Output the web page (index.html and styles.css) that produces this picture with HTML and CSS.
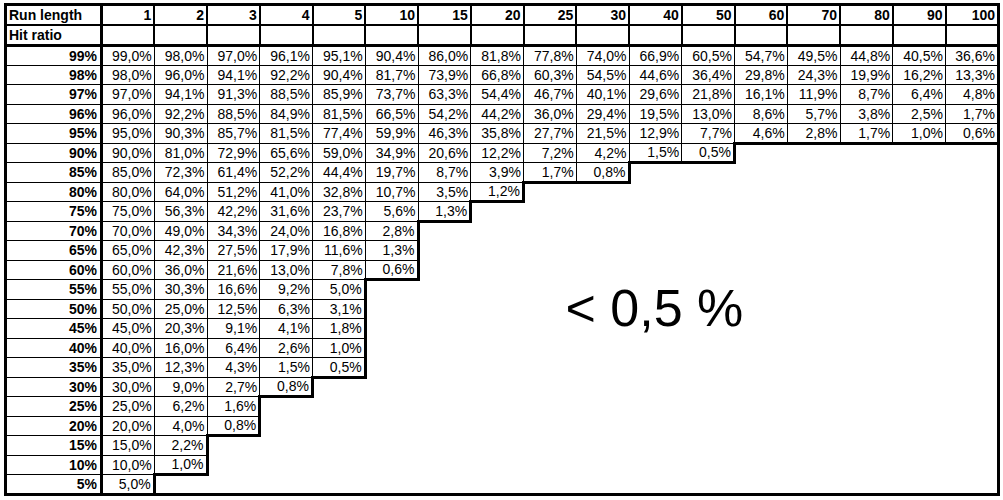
FILE: index.html
```html
<!DOCTYPE html>
<html lang="en">
<head>
    <meta charset="UTF-8">
    <title>Hit ratio by run length</title>
    <link rel="stylesheet" href="styles.css">
</head>
<body>
    <div class="page">
        <table class="grid">
            <colgroup>
                <col class="label-col">
                <col span="17">
            </colgroup>
            <thead>
                <tr class="head">
                    <th class="label left">Run length</th>
                    <th>1</th><th>2</th><th>3</th><th>4</th><th>5</th><th>10</th><th>15</th><th>20</th><th>25</th><th>30</th><th>40</th><th>50</th><th>60</th><th>70</th><th>80</th><th>90</th><th>100</th>
                </tr>
                <tr class="head sub">
                    <th class="label left">Hit ratio</th>
                    <th></th><th></th><th></th><th></th><th></th><th></th><th></th><th></th><th></th><th></th><th></th><th></th><th></th><th></th><th></th><th></th><th></th>
                </tr>
            </thead>
            <tbody>
                <tr>
                    <td class="label">99%</td>
                    <td>99,0%</td><td>98,0%</td><td>97,0%</td><td>96,1%</td><td>95,1%</td><td>90,4%</td><td>86,0%</td><td>81,8%</td><td>77,8%</td><td>74,0%</td><td>66,9%</td><td>60,5%</td><td>54,7%</td><td>49,5%</td><td>44,8%</td><td>40,5%</td><td>36,6%</td>
                </tr>
                <tr>
                    <td class="label">98%</td>
                    <td>98,0%</td><td>96,0%</td><td>94,1%</td><td>92,2%</td><td>90,4%</td><td>81,7%</td><td>73,9%</td><td>66,8%</td><td>60,3%</td><td>54,5%</td><td>44,6%</td><td>36,4%</td><td>29,8%</td><td>24,3%</td><td>19,9%</td><td>16,2%</td><td>13,3%</td>
                </tr>
                <tr>
                    <td class="label">97%</td>
                    <td>97,0%</td><td>94,1%</td><td>91,3%</td><td>88,5%</td><td>85,9%</td><td>73,7%</td><td>63,3%</td><td>54,4%</td><td>46,7%</td><td>40,1%</td><td>29,6%</td><td>21,8%</td><td>16,1%</td><td>11,9%</td><td>8,7%</td><td>6,4%</td><td>4,8%</td>
                </tr>
                <tr>
                    <td class="label">96%</td>
                    <td>96,0%</td><td>92,2%</td><td>88,5%</td><td>84,9%</td><td>81,5%</td><td>66,5%</td><td>54,2%</td><td>44,2%</td><td>36,0%</td><td>29,4%</td><td>19,5%</td><td>13,0%</td><td>8,6%</td><td>5,7%</td><td>3,8%</td><td>2,5%</td><td>1,7%</td>
                </tr>
                <tr>
                    <td class="label">95%</td>
                    <td>95,0%</td><td>90,3%</td><td>85,7%</td><td>81,5%</td><td>77,4%</td><td>59,9%</td><td>46,3%</td><td>35,8%</td><td>27,7%</td><td>21,5%</td><td>12,9%</td><td>7,7%</td><td class="b">4,6%</td><td class="b">2,8%</td><td class="b">1,7%</td><td class="b">1,0%</td><td class="b">0,6%</td>
                </tr>
                <tr>
                    <td class="label">90%</td>
                    <td>90,0%</td><td>81,0%</td><td>72,9%</td><td>65,6%</td><td>59,0%</td><td>34,9%</td><td>20,6%</td><td>12,2%</td><td>7,2%</td><td>4,2%</td><td class="b">1,5%</td><td class="r b">0,5%</td>
                    <td class="e" colspan="5"></td>
                </tr>
                <tr>
                    <td class="label">85%</td>
                    <td>85,0%</td><td>72,3%</td><td>61,4%</td><td>52,2%</td><td>44,4%</td><td>19,7%</td><td>8,7%</td><td>3,9%</td><td class="b">1,7%</td><td class="r b">0,8%</td>
                    <td class="e" colspan="7"></td>
                </tr>
                <tr>
                    <td class="label">80%</td>
                    <td>80,0%</td><td>64,0%</td><td>51,2%</td><td>41,0%</td><td>32,8%</td><td>10,7%</td><td>3,5%</td><td class="r b">1,2%</td>
                    <td class="e" colspan="9"></td>
                </tr>
                <tr>
                    <td class="label">75%</td>
                    <td>75,0%</td><td>56,3%</td><td>42,2%</td><td>31,6%</td><td>23,7%</td><td>5,6%</td><td class="r b">1,3%</td>
                    <td class="e" colspan="10"></td>
                </tr>
                <tr>
                    <td class="label">70%</td>
                    <td>70,0%</td><td>49,0%</td><td>34,3%</td><td>24,0%</td><td>16,8%</td><td class="r">2,8%</td>
                    <td class="e note" colspan="11" rowspan="14">&lt; 0,5 %</td>
                </tr>
                <tr>
                    <td class="label">65%</td>
                    <td>65,0%</td><td>42,3%</td><td>27,5%</td><td>17,9%</td><td>11,6%</td><td class="r">1,3%</td>
                </tr>
                <tr>
                    <td class="label">60%</td>
                    <td>60,0%</td><td>36,0%</td><td>21,6%</td><td>13,0%</td><td>7,8%</td><td class="r b">0,6%</td>
                </tr>
                <tr>
                    <td class="label">55%</td>
                    <td>55,0%</td><td>30,3%</td><td>16,6%</td><td>9,2%</td><td class="r">5,0%</td>
                    <td class="e"></td>
                </tr>
                <tr>
                    <td class="label">50%</td>
                    <td>50,0%</td><td>25,0%</td><td>12,5%</td><td>6,3%</td><td class="r">3,1%</td>
                    <td class="e"></td>
                </tr>
                <tr>
                    <td class="label">45%</td>
                    <td>45,0%</td><td>20,3%</td><td>9,1%</td><td>4,1%</td><td class="r">1,8%</td>
                    <td class="e"></td>
                </tr>
                <tr>
                    <td class="label">40%</td>
                    <td>40,0%</td><td>16,0%</td><td>6,4%</td><td>2,6%</td><td class="r">1,0%</td>
                    <td class="e"></td>
                </tr>
                <tr>
                    <td class="label">35%</td>
                    <td>35,0%</td><td>12,3%</td><td>4,3%</td><td>1,5%</td><td class="r b">0,5%</td>
                    <td class="e"></td>
                </tr>
                <tr>
                    <td class="label">30%</td>
                    <td>30,0%</td><td>9,0%</td><td>2,7%</td><td class="r b">0,8%</td>
                    <td class="e" colspan="2"></td>
                </tr>
                <tr>
                    <td class="label">25%</td>
                    <td>25,0%</td><td>6,2%</td><td class="r">1,6%</td>
                    <td class="e" colspan="3"></td>
                </tr>
                <tr>
                    <td class="label">20%</td>
                    <td>20,0%</td><td>4,0%</td><td class="r b">0,8%</td>
                    <td class="e" colspan="3"></td>
                </tr>
                <tr>
                    <td class="label">15%</td>
                    <td>15,0%</td><td class="r">2,2%</td>
                    <td class="e" colspan="4"></td>
                </tr>
                <tr>
                    <td class="label">10%</td>
                    <td>10,0%</td><td class="r b">1,0%</td>
                    <td class="e" colspan="4"></td>
                </tr>
                <tr>
                    <td class="label">5%</td>
                    <td class="r">5,0%</td>
                    <td class="e" colspan="5"></td>
                </tr>
            </tbody>
        </table>
    </div>
</body>
</html>
```

FILE: styles.css
```css
* {
    margin: 0;
    padding: 0;
    box-sizing: border-box;
}

body {
    background: #fff;
    color: #000;
    font-family: 'Liberation Sans', Arial, Helvetica, sans-serif;
    font-size: 14px;
}

.page {
    padding: 3px 0 0 4px;
}

.grid {
    width: 996px;
    border-collapse: collapse;
    table-layout: fixed;
    border: 3px solid #000;
}

.label-col {
    width: 96px;
}

.grid th,
.grid td {
    border: 1px solid #000;
    padding: 0 2px 0 0;
    text-align: right;
    white-space: nowrap;
    line-height: 16px;
    vertical-align: middle;
}

.grid th {
    font-weight: bold;
    border-width: 2px;
}

.grid tr {
    height: 19.5px;
}

.grid tr.head {
    height: 20.5px;
}

.grid tr.sub th {
    border-bottom: 3px solid #000;
}

.grid .label {
    font-weight: bold;
    border-right: 3px solid #000;
    padding-right: 3px;
}

.grid .left {
    text-align: left;
    padding-left: 2px;
}

/* staircase edge of the filled area */
.grid td.r {
    border-right: 3px solid #000;
}

.grid td.b {
    border-bottom: 3px solid #000;
}

.grid td.e {
    border: none;
}

.grid td.note {
    vertical-align: top;
    text-align: left;
    padding: 59px 0 0 146px;
    font-size: 52px;
    line-height: 1;
}
```
